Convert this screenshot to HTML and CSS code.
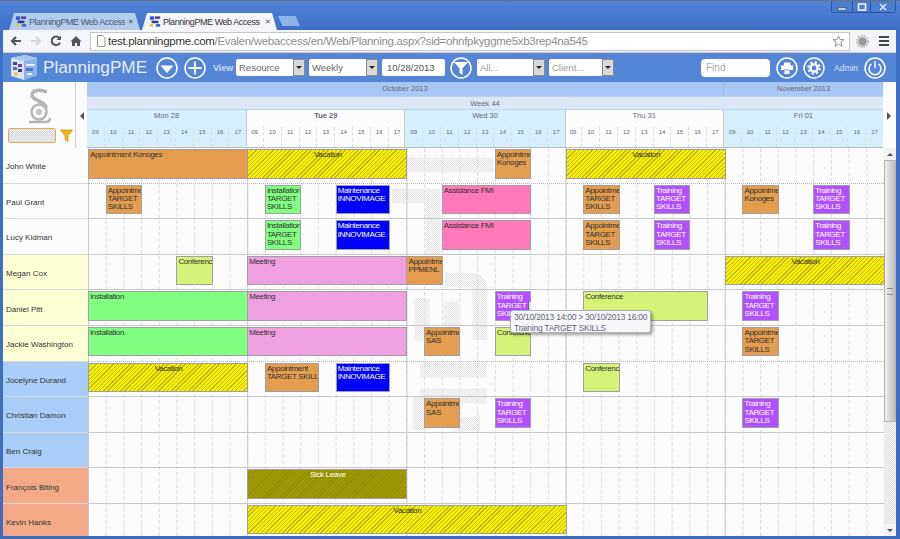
FILE: index.html
```html
<!DOCTYPE html>
<html lang="en">
<head>
    <meta charset="UTF-8">
    <title>PlanningPME Web Access</title>
    <link rel="stylesheet" href="styles.css">
</head>
<body>
    <!-- browser chrome -->
    <div class="tabstrip">
        <div class="tab tab-off">
            <svg class="favicon" viewBox="0 0 14 14"><rect x="1" y="1" width="5" height="4" fill="#3a52c8"/><rect x="7" y="1" width="6" height="3" fill="#5a3fa0"/><rect x="3" y="6" width="8" height="3" fill="#2f3f90"/><rect x="1" y="10" width="4" height="3" fill="#e8c840"/><rect x="8" y="10" width="5" height="3" fill="#4060c0"/></svg>
            <span class="tab-title">PlanningPME Web Access</span>
            <span class="tab-x">✕</span>
        </div>
        <div class="tab tab-on">
            <svg class="favicon" viewBox="0 0 14 14"><rect x="1" y="1" width="5" height="4" fill="#3a52c8"/><rect x="7" y="1" width="6" height="3" fill="#5a3fa0"/><rect x="3" y="6" width="8" height="3" fill="#2f3f90"/><rect x="1" y="10" width="4" height="3" fill="#e8c840"/><rect x="8" y="10" width="5" height="3" fill="#4060c0"/></svg>
            <span class="tab-title">PlanningPME Web Access</span>
            <span class="tab-x">✕</span>
        </div>
        <div class="tab-new"></div>
        <div class="winbtns">
            <span class="winbtn"><svg viewBox="0 0 10 8"><rect x="1" y="5" width="8" height="2" fill="#fff" stroke="#234" stroke-width=".5"/></svg></span>
            <span class="winbtn"><svg viewBox="0 0 10 8"><rect x="1.5" y="1" width="7" height="6" fill="none" stroke="#fff" stroke-width="1.5"/></svg></span>
            <span class="winbtn winbtn-x"><svg viewBox="0 0 10 8"><path d="M2 1l6 6M8 1L2 7" stroke="#dfe8f6" stroke-width="1.6"/></svg></span>
        </div>
    </div>

    <div class="toolbar">
        <svg class="navicon" viewBox="0 0 12 12"><path d="M11 6H3M6 2L2 6l4 4" fill="none" stroke="#555" stroke-width="2.2"/></svg>
        <svg class="navicon" viewBox="0 0 12 12"><path d="M1 6h8M6 2l4 4-4 4" fill="none" stroke="#d4d6da" stroke-width="2.2"/></svg>
        <svg class="navicon" viewBox="0 0 12 12"><path d="M10 7.5A4.3 4.3 0 1 1 9.3 3" fill="none" stroke="#555" stroke-width="2"/><path d="M11 0.5v4.5H6.5z" fill="#555"/></svg>
        <svg class="navicon" viewBox="0 0 12 12"><path d="M6 1L0.5 6.5H2V11h3V8h2v3h3V6.5h1.5z" fill="#555"/></svg>
        <div class="omnibox">
            <svg class="pageicon" viewBox="0 0 10 12"><path d="M1.5 .5h5l2.5 2.5v8.500h-7.500z" fill="#fff" stroke="#999"/></svg>
            <span class="url"><b>test.planningpme.com</b>/Evalen/webaccess/en/Web/Planning.aspx?sid=ohnfpkyggme5xb3rep4na545</span>
            <svg class="star" viewBox="0 0 14 14"><path d="M7 1l1.800 4h4.200l-3.400 2.800 1.200 4.400L7 9.800l-3.800 2.400 1.200-4.400L1 5h4.200z" fill="#fff" stroke="#888"/></svg>
        </div>
        <svg class="exticon" viewBox="0 0 14 14"><circle cx="7" cy="7" r="4.500" fill="#999"/><circle cx="7" cy="7" r="6" fill="none" stroke="#aaa" stroke-width="1.500" stroke-dasharray="2 1.200"/></svg>
        <div class="menuicon"><i></i><i></i><i></i></div>
    </div>

    <!-- application -->
    <div class="appbar">
        <svg class="cube" viewBox="0 0 30 27">
            <path d="M2 4L16 1l12 3v17l-13 5-13-4z" fill="#d8e4f6"/>
            <path d="M2 4l13 3 13-3-12-3z" fill="#a9c4ee"/>
            <path d="M15 7v19l13-5V4z" fill="#8fb2e6"/>
            <rect x="4" y="8" width="4" height="3" fill="#3848b0"/><rect x="9" y="10" width="4" height="3" fill="#6a3fa0"/>
            <rect x="4" y="13" width="4" height="3" fill="#5a60c0"/><rect x="9" y="15" width="4" height="3" fill="#303890"/>
            <circle cx="7" cy="20" r="2" fill="#e4cc3c"/><rect x="17" y="10" width="9" height="2" fill="#e8f0fb"/><rect x="17" y="14" width="7" height="3" fill="#4a78cc"/><rect x="18" y="19" width="5" height="2" fill="#e8f0fb"/>
        </svg>
        <span class="brand">PlanningPME</span>
        <svg class="circicon circ-first" viewBox="0 0 22 22"><circle cx="11" cy="11" r="10" fill="none" stroke="#fff" stroke-width="1.500"/><path d="M4.500 8.500h13L11 16z" fill="#fff"/></svg>
        <svg class="circicon circ-plus" viewBox="0 0 22 22"><circle cx="11" cy="11" r="10" fill="none" stroke="#fff" stroke-width="1.500"/><path d="M11 4.500v13M4.500 11h13" stroke="#fff" stroke-width="1.800"/></svg>
        <span class="view-label">View</span>
        <div class="select sel-res">Resource<i class="sel-btn"></i></div>
        <div class="select sel-week">Weekly<i class="sel-btn"></i></div>
        <div class="date-input">10/28/2013</div>
        <svg class="circicon" viewBox="0 0 22 22"><circle cx="11" cy="11" r="10" fill="none" stroke="#fff" stroke-width="1.500"/><path d="M4 5h14l-5.500 6.500V18l-3-2v-4.500z" fill="#fff"/></svg>
        <div class="select sel-all muted">All...<i class="sel-btn"></i></div>
        <div class="select sel-client muted">Client...<i class="sel-btn"></i></div>

        <div class="appbar-right">
            <div class="find">Find</div>
            <svg class="circicon" viewBox="0 0 22 22"><circle cx="11" cy="11" r="10" fill="none" stroke="#fff" stroke-width="1.500"/><path d="M5 8.500h3V5.500h6.500V8.500H17V13H5z" fill="#fff"/><path d="M8 13h6v4.500H8z" fill="#fff" stroke="#5585d5" stroke-width=".8"/></svg>
            <svg class="circicon" viewBox="0 0 22 22"><circle cx="11" cy="11" r="10" fill="none" stroke="#fff" stroke-width="1.500"/><circle cx="11" cy="11" r="3.600" fill="none" stroke="#fff" stroke-width="2.400"/><circle cx="11" cy="11" r="5.700" fill="none" stroke="#fff" stroke-width="2" stroke-dasharray="2.200 2.280"/></svg>
            <span class="admin">Admin</span>
            <svg class="circicon" viewBox="0 0 22 22"><circle cx="11" cy="11" r="10" fill="none" stroke="#fff" stroke-width="1.500"/><path d="M7.500 6.800a6 6 0 1 0 7 0" fill="none" stroke="#fff" stroke-width="1.500"/><path d="M11 4v7" stroke="#fff" stroke-width="1.500"/></svg>
        </div>
    </div>

    <div class="planning-head">
        <div class="corner">
            <svg class="corner-logo" viewBox="0 0 26 36">
                <path d="M21 4C14 1 6 2 6 7c0 6 14 6 14 13" fill="none" stroke="#b4b4b4" stroke-width="3.500"/>
                <circle cx="13" cy="24" r="7.500" fill="none" stroke="#b4b4b4" stroke-width="2.500"/>
                <circle cx="13" cy="24" r="3" fill="#c4c4c4"/>
                <path d="M3 34h17c3 0 4-2 4-4" fill="none" stroke="#b4b4b4" stroke-width="2.500"/>
            </svg>
            <div class="corner-filter">
                <div class="name-search"></div>
                <svg class="funnel" viewBox="0 0 13 13"><path d="M0.500 1h12L8 6.500V12.500L5 10.500V6.500z" fill="#f2b90c" stroke="#a87d08" stroke-width=".6"/></svg>
            </div>
        </div>
        <div class="side-arrow"><i class="tri-left"></i></div>
        <div class="tl-head">
            <div class="months">
                <div class="month month-oct">October 2013</div>
                <div class="month month-nov">November 2013</div>
            </div>
            <div class="week">Week 44</div>
            <div class="days">
                <div class="day">
                    <div class="day-name">Mon 28</div>
                    <div class="hours"><span>09</span><span>10</span><span>11</span><span>12</span><span>13</span><span>14</span><span>15</span><span>16</span><span>17</span></div>
                </div>
                <div class="day day-today">
                    <div class="day-name"><b>Tue 29</b></div>
                    <div class="hours"><span>09</span><span>10</span><span>11</span><span>12</span><span>13</span><span>14</span><span>15</span><span>16</span><span>17</span></div>
                </div>
                <div class="day">
                    <div class="day-name">Wed 30</div>
                    <div class="hours"><span>09</span><span>10</span><span>11</span><span>12</span><span>13</span><span>14</span><span>15</span><span>16</span><span>17</span></div>
                </div>
                <div class="day day-today">
                    <div class="day-name">Thu 31</div>
                    <div class="hours"><span>09</span><span>10</span><span>11</span><span>12</span><span>13</span><span>14</span><span>15</span><span>16</span><span>17</span></div>
                </div>
                <div class="day">
                    <div class="day-name">Fri 01</div>
                    <div class="hours"><span>09</span><span>10</span><span>11</span><span>12</span><span>13</span><span>14</span><span>15</span><span>16</span><span>17</span></div>
                </div>
            </div>
        </div>
        <div class="side-arrow side-arrow-r"><i class="tri-right"></i></div>
    </div>

    <div class="planning-body">
        <div class="names">
            <div class="name">John White</div>
            <div class="name">Paul Grant</div>
            <div class="name">Lucy Kidman</div>
            <div class="name name-y">Megan Cox</div>
            <div class="name name-y">Daniel Pitt</div>
            <div class="name name-y">Jackie Washington</div>
            <div class="name name-b">Jocelyne Durand</div>
            <div class="name name-b">Christian Damon</div>
            <div class="name name-b">Ben Craig</div>
            <div class="name name-s">François Biting</div>
            <div class="name name-s">Kevin Hanks</div>
        </div>

        <div class="rows">
            <!-- faint logo behind the grid -->
            <svg class="watermark" viewBox="88 148 796 388">
                <defs>
                    <pattern id="dither" width="2" height="2" patternUnits="userSpaceOnUse">
                        <rect width="2" height="2" fill="#fcfcfc"/>
                        <rect width="1" height="1" fill="#e2e2e2"/>
                        <rect x="1" y="1" width="1" height="1" fill="#e2e2e2"/>
                    </pattern>
                </defs>
                <path d="M408 165H493M392 196H433V255M480 340V290Q480 280 470 280H445M422 341V298M451 302V325M420 370H487M420 396H487M421 396V430M455 424H480"/>
            </svg>

            <div class="row row-dot">
                <div class="ev appt" style="grid-column:1/10">Appointment Konoges</div>
                <div class="ev vac" style="grid-column:10/19">Vacation</div>
                <div class="ev appt" style="grid-column:24/26">Appointment<br>Konoges</div>
                <div class="ev vac" style="grid-column:28/37">Vacation</div>
            </div>
            <div class="row">
                <div class="ev appt" style="grid-column:2/4">Appointment<br>TARGET<br>SKILLS</div>
                <div class="ev inst" style="grid-column:11/13">Installation<br>TARGET<br>SKILLS</div>
                <div class="ev maint" style="grid-column:15/18">Maintenance<br>INNOVIMAGE</div>
                <div class="ev assist" style="grid-column:21/26">Assistance FMI</div>
                <div class="ev appt" style="grid-column:29/31">Appointment<br>TARGET<br>SKILLS</div>
                <div class="ev train" style="grid-column:33/35">Training<br>TARGET<br>SKILLS</div>
                <div class="ev appt" style="grid-column:38/40">Appointment<br>Konoges</div>
                <div class="ev train" style="grid-column:42/44">Training<br>TARGET<br>SKILLS</div>
            </div>
            <div class="row">
                <div class="ev inst" style="grid-column:11/13">Installation<br>TARGET<br>SKILLS</div>
                <div class="ev maint" style="grid-column:15/18">Maintenance<br>INNOVIMAGE</div>
                <div class="ev assist" style="grid-column:21/26">Assistance FMI</div>
                <div class="ev appt" style="grid-column:29/31">Appointment<br>TARGET<br>SKILLS</div>
                <div class="ev train" style="grid-column:33/35">Training<br>TARGET<br>SKILLS</div>
                <div class="ev train" style="grid-column:42/44">Training<br>TARGET<br>SKILLS</div>
            </div>
            <div class="row">
                <div class="ev conf" style="grid-column:6/8">Conference</div>
                <div class="ev meet" style="grid-column:10/19">Meeting</div>
                <div class="ev appt" style="grid-column:19/21">Appointment<br>PPMENL</div>
                <div class="ev vac" style="grid-column:37/46">Vacation</div>
            </div>
            <div class="row">
                <div class="ev inst" style="grid-column:1/10">Installation</div>
                <div class="ev meet" style="grid-column:10/19">Meeting</div>
                <div class="ev train" style="grid-column:24/26">Training<br>TARGET<br>SKILLS</div>
                <div class="ev conf" style="grid-column:29/36">Conference</div>
                <div class="ev train" style="grid-column:38/40">Training<br>TARGET<br>SKILLS</div>
            </div>
            <div class="row row-dot">
                <div class="ev inst" style="grid-column:1/10">Installation</div>
                <div class="ev meet" style="grid-column:10/19">Meeting</div>
                <div class="ev appt" style="grid-column:20/22">Appointment<br>SAS</div>
                <div class="ev conf" style="grid-column:24/26">Conference</div>
                <div class="ev appt" style="grid-column:38/40">Appointment<br>TARGET<br>SKILLS</div>
            </div>
            <div class="row">
                <div class="ev vac" style="grid-column:1/10">Vacation</div>
                <div class="ev appt" style="grid-column:11/14">Appointment<br>TARGET SKILLS</div>
                <div class="ev maint" style="grid-column:15/18">Maintenance<br>INNOVIMAGE</div>
                <div class="ev conf" style="grid-column:29/31">Conference</div>
            </div>
            <div class="row">
                <div class="ev appt" style="grid-column:20/22">Appointment<br>SAS</div>
                <div class="ev train" style="grid-column:24/26">Training<br>TARGET<br>SKILLS</div>
                <div class="ev train" style="grid-column:38/40">Training<br>TARGET<br>SKILLS</div>
            </div>
            <div class="row"></div>
            <div class="row">
                <div class="ev sick" style="grid-column:10/19">Sick Leave</div>
            </div>
            <div class="row">
                <div class="ev vac" style="grid-column:10/28">Vacation</div>
            </div>

            <div class="tooltip">
                <i class="tip-mark"></i>
                <div>30/10/2013 14:00 &gt; 30/10/2013 16:00</div>
                <div>Training TARGET SKILLS</div>
            </div>
        </div>

        <div class="scrollbar">
            <div class="sb-up"></div>
            <div class="sb-thumb"><i></i></div>
            <div class="sb-track"></div>
            <div class="sb-down"></div>
        </div>
    </div>
</body>
</html>
```

FILE: styles.css
```css
html, body {
    margin: 0;
    height: 100%;
}
body {
    width: 900px;
    height: 539px;
    box-sizing: border-box;
    padding: 0 4px 3px 3px;
    overflow: hidden;
    display: flex;
    flex-direction: column;
    font-family: "Liberation Sans", Arial, sans-serif;
    background: linear-gradient(to bottom, #5283d6, #3f70c6 30px, #3f6ebf);
    border-top: 1px solid #6a7080;
}

/* tabs */
.tabstrip {
    flex: none;
    height: 29px;
    display: flex;
    align-items: flex-end;
    padding-left: 6px;
}
.tab {
    height: 17px;
    display: flex;
    align-items: center;
    box-sizing: border-box;
    font-size: 9px;
    letter-spacing: -0.45px;
    clip-path: polygon(0 100%, 5px 0, calc(100% - 5px) 0, 100% 100%);
}
.tab-off {
    width: 131px;
    padding-left: 6px;
    background: #b3cdef;
    color: #4a5a70;
}
.tab-on {
    width: 135px;
    padding-left: 7px;
    background: #f4f5f8;
    color: #333;
    margin-left: 2px;
}
.favicon {
    width: 12px;
    height: 13px;
    flex: none;
    margin-right: 2px;
}
.tab-title {
    flex: 1;
    white-space: nowrap;
    overflow: hidden;
}
.tab-x {
    flex: none;
    width: 8px;
    font-size: 7px;
    color: #555;
    margin: 0 4px 0 3px;
}
.tab-new {
    width: 22px;
    height: 10px;
    margin: 0 0 4px 1px;
    background: #8fb2e8;
    clip-path: polygon(0 0, 80% 0, 100% 100%, 20% 100%);
}
.winbtns {
    margin-left: auto;
    align-self: flex-start;
    display: flex;
    border: 1px solid #2c5496;
    border-top: 0;
    border-radius: 0 0 3px 3px;
    height: 11px;
}
.winbtn {
    width: 17px;
    display: flex;
    align-items: center;
    justify-content: center;
    border-left: 1px solid #2c5496;
    background: #4a7ccf;
}
.winbtn:first-child {
    border-left: 0;
    width: 20px;
}
.winbtn-x {
    width: 24px;
}
.winbtn svg {
    width: 10px;
    height: 8px;
}

/* browser toolbar */
.toolbar {
    flex: none;
    height: 23px;
    display: flex;
    align-items: center;
    box-sizing: border-box;
    padding: 0 6px 0 7px;
    background: #f4f5f8;
    border-bottom: 1px solid #c8c8ce;
}
.navicon {
    width: 12px;
    height: 12px;
    flex: none;
    margin-right: 8px;
}
.omnibox {
    flex: none;
    width: 760px;
    height: 19px;
    box-sizing: border-box;
    display: flex;
    align-items: center;
    background: #fff;
    border: 1px solid #c4c6cc;
    padding: 0 2px 0 5px;
}
.pageicon {
    width: 10px;
    height: 12px;
    flex: none;
    margin-right: 2px;
}
.url {
    flex: 1;
    font-size: 11.500px;
    letter-spacing: -0.3px;
    color: #8a9090;
    white-space: nowrap;
    overflow: hidden;
}
.url b {
    font-weight: normal;
    color: #333;
}
.star {
    width: 13px;
    height: 13px;
    flex: none;
    margin-right: 2px;
}
.exticon {
    width: 13px;
    height: 13px;
    flex: none;
    margin-left: 6px;
}
.menuicon {
    flex: none;
    width: 10px;
    margin-left: 10px;
    display: flex;
    flex-direction: column;
    gap: 2px;
}
.menuicon i {
    display: block;
    height: 2px;
    background: #444;
}

/* application bar */
.appbar {
    flex: none;
    height: 29px;
    display: flex;
    align-items: center;
    background: #5585d5;
    padding-left: 6px;
    padding-right: 10px;
}
.cube {
    width: 30px;
    height: 27px;
    flex: none;
}
.brand {
    font-size: 17.200px;
    color: #e8effb;
    margin-left: 4px;
    width: 103px;
}
.circicon {
    width: 22px;
    height: 22px;
    flex: none;
}
.circ-first {
    margin-left: 10px;
}
.circ-plus {
    margin-left: 6px;
}
.view-label {
    font-size: 9px;
    font-weight: bold;
    color: #cfdcf5;
    margin: 0 4px 0 7px;
    width: 19px;
}
.select, .date-input {
    position: relative;
    height: 17px;
    box-sizing: border-box;
    background: #fff;
    border-radius: 2px;
    font-size: 9.500px;
    line-height: 17px;
    color: #666;
    padding-left: 3px;
    margin-right: 4px;
}
.sel-res, .sel-week {
    width: 69px;
}
.date-input {
    width: 63px;
    padding-left: 5px;
    margin-right: 5px;
    color: #555;
}
.sel-all {
    width: 68px;
    margin-left: 5px;
}
.sel-client {
    width: 65px;
}
.muted {
    color: #999;
}
.sel-btn {
    position: absolute;
    right: 0;
    top: 0;
    width: 12px;
    height: 17px;
    box-sizing: border-box;
    border: 1px solid #8a8a8a;
    background: #d9d9d9;
}
.sel-btn::after {
    content: "";
    position: absolute;
    left: 2px;
    top: 6px;
    border: 3px solid transparent;
    border-top: 3px solid #222;
    border-bottom: 0;
}
.appbar-right {
    margin-left: auto;
    display: flex;
    align-items: center;
    gap: 5px;
}
.find {
    width: 69px;
    height: 18px;
    box-sizing: border-box;
    background: #fff;
    border-radius: 4px;
    font-size: 10px;
    line-height: 18px;
    color: #aaa;
    padding-left: 5px;
    margin-right: 1px;
}
.admin {
    font-size: 8.500px;
    color: #dde7f8;
    margin: 0 1px 0 4px;
    width: 24px;
}

/* planning header */
.planning-head {
    flex: none;
    height: 66px;
    display: flex;
    background: #fcfcfc;
}
.corner {
    flex: none;
    width: 72px;
    display: flex;
    flex-direction: column;
    align-items: center;
}
.corner-logo {
    width: 26px;
    height: 36px;
    margin-top: 6px;
}
.corner-filter {
    display: flex;
    align-items: center;
    width: 72px;
    box-sizing: border-box;
    padding-left: 5px;
    margin-top: 4px;
}
.name-search {
    width: 48px;
    height: 15px;
    box-sizing: border-box;
    border: 1px solid #e0ae58;
    border-radius: 2px;
    background: repeating-conic-gradient(#d4d8de 0 25%, #f0f0f0 0 50%) 0 0 / 2px 2px;
}
.funnel {
    width: 13px;
    height: 13px;
    margin-left: 4px;
}
.side-arrow {
    flex: none;
    width: 12px;
    border-left: 1px solid #d0d0d0;
    display: flex;
    justify-content: center;
    padding-top: 30px;
    box-sizing: border-box;
}
.side-arrow-r {
    border-left: 0;
}
.tri-left, .tri-right {
    width: 0;
    height: 0;
    border: 4px solid transparent;
}
.tri-left {
    border-left: 0;
    border-right: 4px solid #555;
}
.tri-right {
    border-right: 0;
    border-left: 4px solid #555;
}
.tl-head {
    flex: none;
    width: 796px;
    display: flex;
    flex-direction: column;
    color: #667;
}
.months {
    height: 14px;
    display: flex;
    background: #a7c8f4;
    font-size: 7.500px;
    line-height: 14px;
    text-align: center;
}
.month-oct {
    flex: 4;
}
.month-nov {
    flex: 1;
    border-left: 1px solid #9ab6dc;
}
.week {
    height: 14px;
    box-sizing: border-box;
    font-size: 7.500px;
    line-height: 13px;
    text-align: center;
    border-top: 1px solid #bcd2ee;
    border-bottom: 1px solid #bcd2ee;
    background: repeating-conic-gradient(#d4e4f8 0 25%, #e9e8f7 0 50%) 0 0 / 2px 2px;
}
.days {
    flex: 1;
    display: flex;
}
.day {
    flex: 1;
    min-width: 0;
    display: flex;
    flex-direction: column;
    background: #d5effb;
}
.day-today {
    background: #fcfcfc;
    box-shadow: inset 1px 0 #c8c8c8, inset -1px 0 #c8c8c8;
}
.day-name {
    height: 17px;
    font-size: 7.500px;
    line-height: 12px;
    text-align: center;
}
.hours {
    flex: 1;
    display: flex;
    border-bottom: 1px solid #bbb;
}
.hours span {
    flex: 1;
    box-sizing: border-box;
    font-size: 6px;
    line-height: 10px;
    text-align: center;
    border-right: 1px dashed #d4e0da;
}
.hours span:last-child {
    border-right: 0;
}

/* resources and rows */
.planning-body {
    flex: 1;
    min-height: 0;
    display: flex;
    overflow: hidden;
    background: #fcfcfc;
}
.names {
    flex: none;
    width: 85px;
}
.name {
    height: 35.600px;
    box-sizing: border-box;
    display: flex;
    align-items: center;
    padding: 3px 0 0 3px;
    font-size: 8px;
    color: #333;
    border-bottom: 1px solid #d8d8d8;
    background: #fcfcfc;
}
.name-y {
    background: #ffffd6;
}
.name-b {
    background: #a9cdf6;
}
.name-s {
    background: #f4aa88;
}
.rows {
    flex: none;
    width: 796px;
    position: relative;
    background: #fcfcfc;
}
.watermark {
    position: absolute;
    left: 0;
    top: 0;
    width: 796px;
    height: 388px;
}
.watermark path {
    fill: none;
    stroke: url(#dither);
    stroke-width: 15;
}
.rows::before {
    content: "";
    position: absolute;
    inset: 0;
    z-index: 1;
    background: linear-gradient(to right, #e0dbec 1px, transparent 1px) 0 0 / 17.689px 100%;
    -webkit-mask-image: repeating-linear-gradient(to bottom, #000 0 4px, transparent 4px 6px);
    mask-image: repeating-linear-gradient(to bottom, #000 0 4px, transparent 4px 6px);
}
.row {
    position: relative;
    z-index: 2;
    height: 35.600px;
    box-sizing: border-box;
    padding-top: 1px;
    display: grid;
    grid-template-columns: repeat(45, 1fr);
    align-items: start;
    border-bottom: 1px solid #c8c8c8;
    background: linear-gradient(to right, #c8c8c8 1px, transparent 1px) 0 0 / 159.200px 100%;
}
.row-dot {
    border-bottom: 1px dotted #b4b4b4;
}
.ev {
    grid-row: 1;
    height: 29.500px;
    min-width: 0;
    margin-right: -1px;
    box-sizing: border-box;
    overflow: hidden;
    white-space: nowrap;
    border: 1px solid #a0a0a0;
    padding: 1px 0 0 1px;
    font-size: 8px;
    letter-spacing: -0.35px;
    line-height: 8.400px;
    color: #333;
}
.appt {
    background: #e49d4e;
}
.inst {
    background: #80ff80;
}
.maint {
    background: #0000ff;
    color: #fff;
}
.assist {
    background: #ff78b8;
}
.meet {
    background: #f0a0e0;
}
.conf {
    background: #d6f278;
}
.train {
    background: #b050ff;
    color: #fff;
}
.vac {
    text-align: center;
    background: repeating-linear-gradient(-45deg, #f8f000 0 2px, #bdb622 2px 3px);
}
.sick {
    text-align: center;
    color: #fff;
    background: repeating-linear-gradient(-45deg, #a09a00 0 2px, #8e8a06 2px 3px);
}
.tooltip {
    position: absolute;
    left: 422px;
    top: 162px;
    z-index: 3;
    width: 141px;
    height: 23px;
    box-sizing: border-box;
    padding: 1px 0 0 3px;
    background: #f6f8fb;
    border: 1px solid #b0b0b0;
    border-radius: 3px;
    box-shadow: 2px 2px 3px rgba(0, 0, 0, 0.35);
    font-size: 8.500px;
    letter-spacing: -0.25px;
    line-height: 10.500px;
    color: #667;
    white-space: nowrap;
}
.tip-mark {
    position: absolute;
    left: 17px;
    top: -9px;
    width: 2px;
    height: 8px;
    background: #ddd;
    border-left: 1px solid #666;
}

/* scrollbar */
.scrollbar {
    flex: none;
    width: 12px;
    display: flex;
    flex-direction: column;
    background: repeating-conic-gradient(#dcdcdc 0 25%, #fafafa 0 50%) 0 0 / 2px 2px;
}
.sb-up, .sb-down {
    flex: none;
    height: 12px;
    display: flex;
    align-items: center;
    justify-content: center;
    background: #f4f4f4;
}
.sb-up::after, .sb-down::after {
    content: "";
    border: 3px solid transparent;
}
.sb-up::after {
    border-top: 0;
    border-bottom: 3px solid #555;
}
.sb-down::after {
    border-bottom: 0;
    border-top: 3px solid #555;
}
.sb-thumb {
    flex: none;
    height: 262px;
    display: flex;
    align-items: center;
    justify-content: center;
    box-sizing: border-box;
    border: 1px solid #b4b4b4;
    background: linear-gradient(to right, #f2f2f2, #d4d4d4 50%, #bcbcbc);
}
.sb-thumb i {
    display: block;
    width: 6px;
    height: 5px;
    border-top: 1px solid #888;
    border-bottom: 1px solid #888;
    position: relative;
}
.sb-track {
    flex: 1;
}
```
